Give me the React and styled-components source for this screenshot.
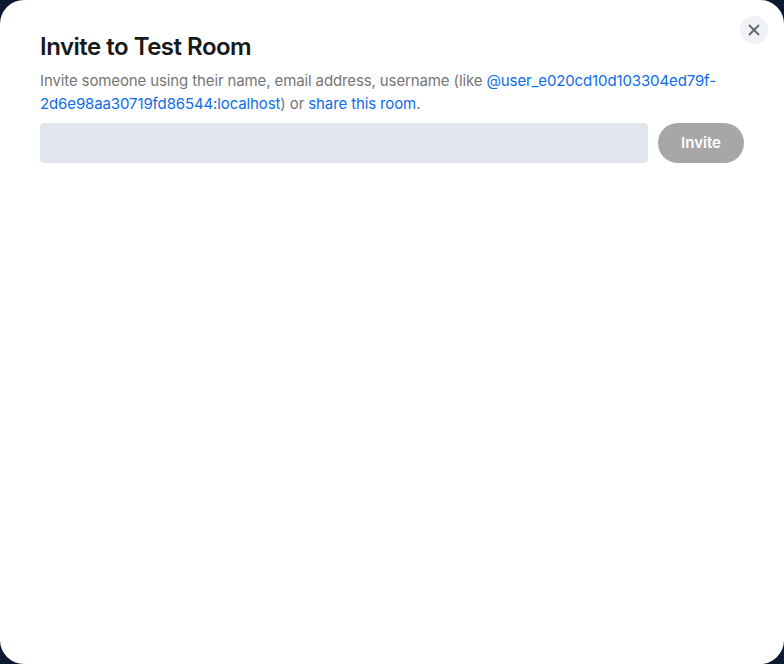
import React from "react";
import styled, { createGlobalStyle } from "styled-components";

const Global = createGlobalStyle`
  html, body { margin: 0; padding: 0; background: #0b1a2e; }
  body { font-family: Inter, "Noto Sans", sans-serif; }
  #root { height: 664px; }
`;

const Dialog = styled.div`
  box-sizing: border-box;
  width: 784px;
  height: 664px;
  background: #ffffff;
  border-radius: 24px;
  padding: 30px 40px 0 40px;
  position: relative;
  display: flex;
  flex-direction: column;
`;

const Title = styled.h1`
  margin: 0;
  font-size: 24px;
  line-height: 34px;
  font-weight: 600;
  color: #17191c;
  letter-spacing: -0.5px;
`;

const Description = styled.p`
  margin: 5px 0 0 0;
  font-size: 15px;
  line-height: 23px;
  color: #767676;
  letter-spacing: -0.12px;
`;

const Link = styled.a`
  color: #0d6de8;
  text-decoration: none;
  cursor: pointer;
`;

const InviteRow = styled.div`
  display: flex;
  gap: 10px;
  margin-top: 8px;
  align-items: center;
`;

const Input = styled.input`
  flex: 1;
  box-sizing: border-box;
  height: 40px;
  border: none;
  border-radius: 4px;
  background: #e1e5ec;
  padding: 0 12px;
  font-family: inherit;
  font-size: 15px;
  outline: none;
`;

const InviteButton = styled.button`
  box-sizing: border-box;
  width: 86px;
  height: 40px;
  border: none;
  border-radius: 20px;
  background: #a7a7a7;
  color: #ffffff;
  font-family: inherit;
  font-size: 15px;
  font-weight: 600;
  padding-bottom: 2px;
`;

const CloseButton = styled.button`
  position: absolute;
  top: 16px;
  right: 16px;
  width: 28px;
  height: 28px;
  border: none;
  border-radius: 50%;
  background: #eff1f4;
  display: flex;
  align-items: center;
  justify-content: center;
  padding: 0;
  color: #5c6470;
  cursor: pointer;
`;

export default function App() {
  return (
    <>
      <Global />
      <Dialog>
        <Title>Invite to Test Room</Title>
        <Description>
          Invite someone using their name, email address, username (like{" "}
          <Link>@user_e020cd10d103304ed79f-2d6e98aa30719fd86544:localhost</Link>) or{" "}
          <Link>share this room</Link>.
        </Description>
        <InviteRow>
          <Input />
          <InviteButton disabled>Invite</InviteButton>
        </InviteRow>
        <CloseButton aria-label="Close">
          <svg width="12" height="12" viewBox="0 0 12 12">
            <path d="M1.5 1.5 L10.5 10.5 M10.5 1.5 L1.5 10.5" stroke="currentColor" strokeWidth="1.8" strokeLinecap="round" />
          </svg>
        </CloseButton>
      </Dialog>
    </>
  );
}
